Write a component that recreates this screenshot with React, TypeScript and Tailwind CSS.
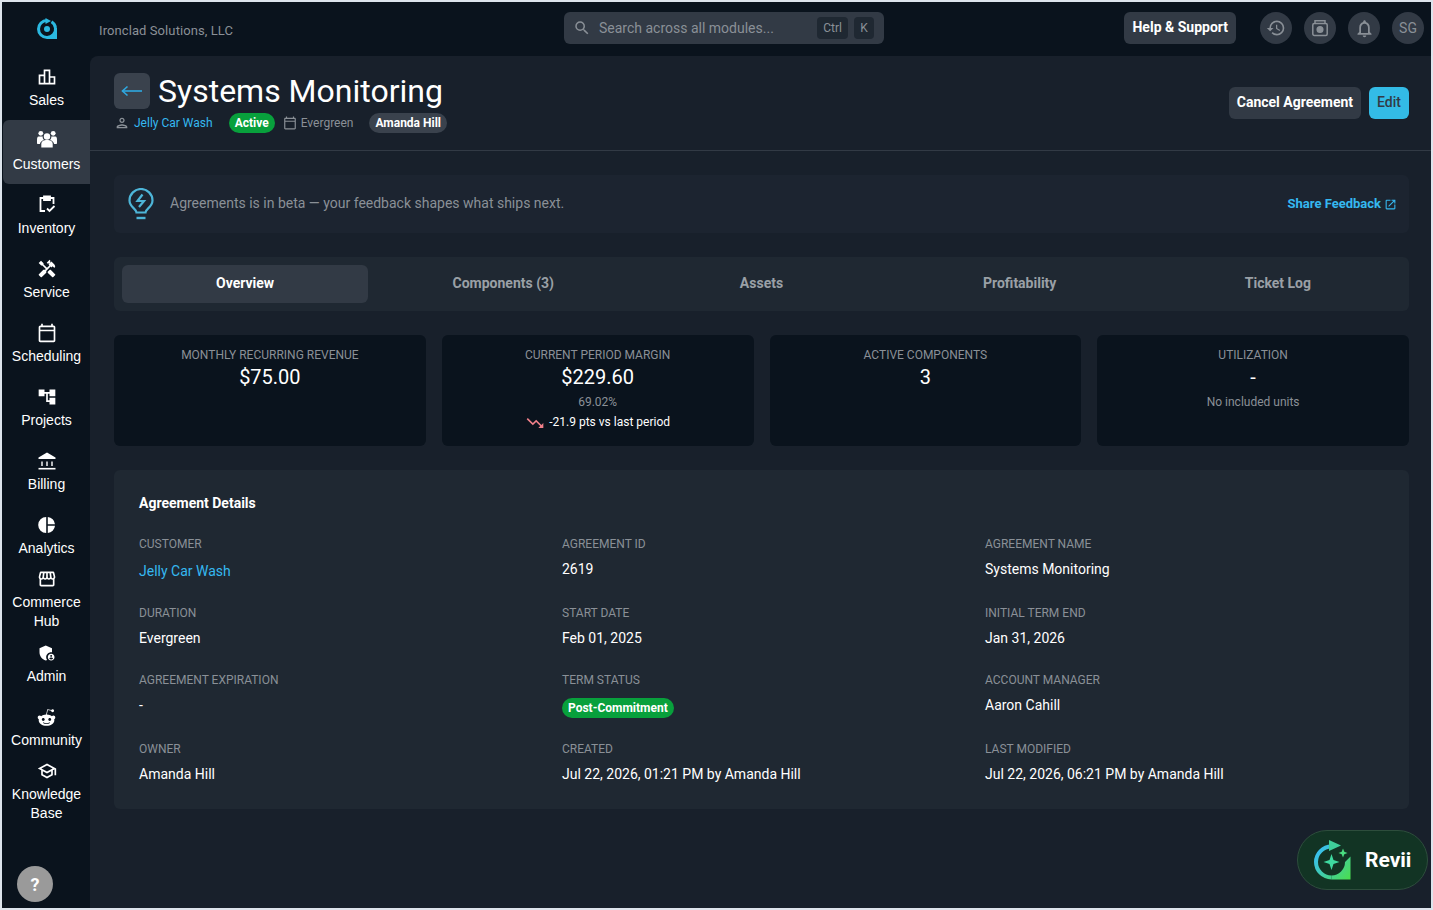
import React from "react";
import {
  MdOutlineLeaderboard, MdHandyman, MdOutlineCalendarToday, MdAccountTree,
  MdOutlineStorefront, MdAdminPanelSettings, MdOutlineSchool, MdHistory,
  MdOutlineNotifications, MdSearch, MdOutlinePerson, MdTrendingDown, MdOpenInNew,
} from "react-icons/md";
import { FaRedditAlien } from "react-icons/fa";

const People = () => (
  <svg viewBox="0 0 20 20" width="20" height="20" fill="currentColor">
    <circle cx="10" cy="7.500" r="3.200" />
    <circle cx="3.800" cy="4.300" r="2.400" />
    <circle cx="16.200" cy="4.300" r="2.400" />
    <path d="M4.300 18.500v-3.500c0-2.700 2.500-4 5.700-4s5.700 1.300 5.700 4v3.500z" />
    <path d="M1.500 7.500h4.200c-.2 1.500.4 2.700 1.300 3.500-2 .6-3.700 1.800-4.100 4H1c-.6 0-1-.4-1-1v-3c0-2 .5-3.500 1.500-3.500z" />
    <path d="M18.500 7.500h-4.200c.2 1.500-.4 2.700-1.300 3.500 2 .6 3.700 1.800 4.100 4H19c.6 0 1-.4 1-1v-3c0-2-.5-3.500-1.500-3.500z" />
  </svg>
);
const Bank = () => (
  <svg viewBox="0 0 20 20" width="20" height="20" fill="none" stroke="currentColor">
    <path d="M10 1.500L18.500 6.500V8H1.500V6.500Z" fill="currentColor" stroke="none" />
    <path d="M5 10.500V15M10 10.500V15M15 10.500V15" strokeWidth="1.400" />
    <path d="M1.500 17.700H18.500" strokeWidth="1.600" />
  </svg>
);
const Inv = () => (
  <svg viewBox="0 1 20 20" width="20" height="20" fill="none" stroke="currentColor" strokeWidth="1.800">
    <path d="M7 4H3.500v13H8M13 4h3.500v6" />
    <path d="M7 2.500h6V6H7z" fill="currentColor" />
    <path d="M10 14.500l2.500 2.500 5-5" />
  </svg>
);
const Pie = () => (
  <svg viewBox="0 0 20 20" width="20" height="20" fill="currentColor">
    <path d="M9.200 2v16a8 8 0 0 1 0-16zM10.800 2a8 8 0 0 1 7.200 7.200h-7.200zM10.800 10.800H18a8 8 0 0 1-7.200 7.200z" />
  </svg>
);
const Logo = () => (
  <svg viewBox="0 0 20 21" width="20" height="21" fill="none" className="ml-[2px]">
    <path d="M10 2.500A8.500 8.500 0 0 0 10 19.500" stroke="#2bb8e0" strokeWidth="3" />
    <path d="M14.500 3.800A8.500 8.500 0 0 1 18.500 10" stroke="#2bb8e0" strokeWidth="3" />
    <path d="M20 10V21H10V18A7 7 0 0 0 17 10Z" fill="#2bb8e0" />
    <path d="M8.500 0L14 3L8.500 6Z" fill="#2bb8e0" />
    <circle cx="10" cy="11" r="3" fill="#2bb8e0" />
  </svg>
);
const RevLogo = () => (
  <svg viewBox="0 0 38 40" width="38" height="40" fill="none">
    <defs>
      <linearGradient id="rg" gradientUnits="userSpaceOnUse" x1="2" y1="10" x2="36" y2="38">
        <stop offset="0" stopColor="#38bdf8" />
        <stop offset="1" stopColor="#4ade50" />
      </linearGradient>
    </defs>
    <path d="M17.500 6.500A15.500 15.500 0 0 0 17.500 37.500" stroke="url(#rg)" strokeWidth="4" />
    <path d="M36.500 16.500V39.500H17.500V35.500A13.500 13.500 0 0 0 31 22Z" fill="url(#rg)" />
    <path d="M15 0L27 5.500L15 11Z" fill="#3fcf9a" />
    <path d="M17.500 14l2 6 6 2-6 2-2 6-2-6-6-2 6-2z" fill="#3fd9a0" />
    <path d="M29 8.500l1.300 3.200 3.200 1.300-3.200 1.300-1.300 3.200-1.300-3.200-3.200-1.300 3.200-1.300z" fill="#4ade80" />
  </svg>
);
const Bulb = () => (
  <svg viewBox="0 0 26 32" width="26" height="32" fill="none" stroke="#4db5d8" strokeWidth="2.200">
    <path d="M8.500 24.500C8.500 21 1.500 19 1.500 12.500a11.500 11.500 0 0 1 23 0C24.500 19 17.500 21 17.500 24.500Z" />
    <path d="M8.500 30H17.500" strokeWidth="2.400" />
    <path d="M14.500 6.500L9.500 13H16L11 19" />
  </svg>
);
const Timer = () => (
  <svg viewBox="0 0 20 20" width="20" height="20" fill="none" stroke="#8a9097" strokeWidth="1.500">
    <path d="M5 5.500V2.800h10v2.700" />
    <rect x="2.800" y="5.500" width="14.400" height="12" rx="1.500" />
    <circle cx="10" cy="11.500" r="2.800" fill="#8a9097" />
  </svg>
);
const BackArrow = () => (
  <svg viewBox="0 0 22 12" width="22" height="12" fill="none" stroke="#2fa8e0" strokeWidth="1.600">
    <path d="M1.500 6H21" />
    <path d="M6.500 1.500L1.500 6L6.500 10.500" />
  </svg>
);

const nav: { label: string[]; icon: React.ReactNode; h: string; active?: boolean; up?: boolean }[] = [
  { label: ["Sales"], icon: <MdOutlineLeaderboard size={20} />, h: "h-16" },
  { label: ["Customers"], icon: <People />, h: "h-16", active: true, up: true },
  { label: ["Inventory"], icon: <Inv />, h: "h-16" },
  { label: ["Service"], icon: <MdHandyman size={20} />, h: "h-16" },
  { label: ["Scheduling"], icon: <MdOutlineCalendarToday size={20} />, h: "h-16" },
  { label: ["Projects"], icon: <MdAccountTree size={20} />, h: "h-16" },
  { label: ["Billing"], icon: <Bank />, h: "h-16" },
  { label: ["Analytics"], icon: <Pie />, h: "h-[54px]" },
  { label: ["Commerce", "Hub"], icon: <MdOutlineStorefront size={20} />, h: "h-[74px]" },
  { label: ["Admin"], icon: <MdAdminPanelSettings size={20} />, h: "h-16" },
  { label: ["Community"], icon: <FaRedditAlien size={19} />, h: "h-[54px]" },
  { label: ["Knowledge", "Base"], icon: <MdOutlineSchool size={20} />, h: "h-[74px]" },
];

const NavItem = ({ item }: { item: (typeof nav)[number] }) => (
  <div
    className={`${item.h} flex flex-col items-center shrink-0 ${item.up ? "pt-[9px]" : "pt-[11px]"} ml-px rounded-l-md text-white ${
      item.active ? "bg-[#323a45]" : ""
    }`}
  >
    <div className="h-5 flex items-center justify-center">{item.icon}</div>
    <div className={`${item.up ? "mt-[6px]" : "mt-1"} text-center text-[14px] leading-[19px] font-['Liberation_Sans',sans-serif]`}>
      {item.label.map((l) => (
        <div key={l}>{l}</div>
      ))}
    </div>
  </div>
);

const RoundBtn = ({ children }: { children: React.ReactNode }) => (
  <div className="w-8 h-8 rounded-full bg-[#323a45] flex items-center justify-center text-[#8a9097]">{children}</div>
);

const Stat = ({ title, value, sub, trend }: { title: string; value: string; sub?: string; trend?: boolean }) => (
  <div className="h-[111px] rounded-md bg-[#0a131d] flex flex-col items-center pt-[11px]">
    <div className="text-[12px] leading-[18px] text-[#8a9097] uppercase">{title}</div>
    <div className="text-[20px] leading-[28px] text-white mt-[-1px]">{value}</div>
    {sub && <div className="text-[12px] leading-[18px] text-[#8a9097] mt-[2px]">{sub}</div>}
    {trend && (
      <div className="flex items-center gap-[4px] text-[12px] leading-[18px] text-white">
        <MdTrendingDown size={20} className="text-[#f0808a] mt-[2px]" />
        -21.9 pts vs last period
      </div>
    )}
  </div>
);

const Field = ({ label, children }: { label: string; children: React.ReactNode }) => (
  <div>
    <div className="text-[12px] leading-[18px] text-[#8a9097] uppercase">{label}</div>
    <div className="mt-[6px] text-[14px] leading-[20px] text-white">{children}</div>
  </div>
);

export default function App() {
  return (
    <div className="w-[1433px] h-[910px] border-2 border-[#dde4ec] bg-[#0a131d] flex overflow-hidden relative font-['Roboto',sans-serif]">
      <aside className="w-[88px] shrink-0 flex flex-col">
        <div className="h-[54px] shrink-0 flex items-center justify-center pb-[1px]">
          <Logo />
        </div>
        {nav.map((n) => (
          <NavItem key={n.label[0]} item={n} />
        ))}
        <div className="mt-[42px] ml-[15px] w-9 h-9 rounded-full bg-[#9a9a9a] flex items-center justify-center text-white font-bold text-[18px]">
          ?
        </div>
      </aside>
      <div className="flex-1 flex flex-col min-w-0">
        <header className="h-[54px] shrink-0 flex items-center relative pr-[7px]">
          <div className="ml-[9px] mt-1 text-[13px] tracking-[0.09px] text-[#8a9097] w-[465px]">Ironclad Solutions, LLC</div>
          <div className="w-[320px] h-8 rounded-md bg-[#323a45] flex items-center pl-[9px] pr-[10px] mt-[-2px]">
            <MdSearch size={18} className="text-[#8a9097]" />
            <span className="ml-2 text-[14px] text-[#8a9097] flex-1">Search across all modules...</span>
            <span className="h-[22px] px-[6px] rounded bg-[#1f2832] flex items-center text-[12px] text-[#8a9097]">Ctrl</span>
            <span className="h-[22px] w-[20px] ml-[6px] rounded bg-[#1f2832] flex items-center justify-center text-[12px] text-[#8a9097]">K</span>
          </div>
          <div className="ml-auto flex items-center mt-[-2px]">
            <div className="h-8 px-2 pb-[2px] rounded-md bg-[#323a45] flex items-center text-[14px] font-bold text-white mr-6">Help &amp; Support</div>
            <div className="flex gap-3">
              <RoundBtn><MdHistory size={20} /></RoundBtn>
              <RoundBtn><Timer /></RoundBtn>
              <RoundBtn><MdOutlineNotifications size={21} /></RoundBtn>
              <RoundBtn><span className="text-[14px]">SG</span></RoundBtn>
            </div>
          </div>
        </header>
        <main className="flex-1 bg-[#18202b] rounded-tl-lg min-h-0">
          <div className="h-[95px] border-b border-[#323a45] pl-6 pr-[22px] flex justify-between">
            <div>
              <div className="flex items-center gap-2 pt-[17px]">
                <div className="w-9 h-9 rounded-md bg-[#3a424d] flex items-center justify-center">
                  <BackArrow />
                </div>
                <h1 className="text-[32px] leading-[36px] text-white">Systems Monitoring</h1>
              </div>
              <div className="flex items-center h-5 mt-1 text-[12px]">
                <MdOutlinePerson size={16} className="text-[#8a9097]" />
                <span className="ml-[4px] text-[#35b8f0]">Jelly Car Wash</span>
                <span className="ml-4 h-5 px-[6px] rounded-full bg-[#08a03c] text-white font-bold flex items-center">Active</span>
                <MdOutlineCalendarToday size={14} className="ml-2 text-[#8a9097]" />
                <span className="ml-[4px] text-[#8a9097]">Evergreen</span>
                <span className="ml-4 h-5 px-[6px] rounded-full bg-[#3a424d] text-white font-bold flex items-center">Amanda Hill</span>
              </div>
            </div>
            <div className="flex gap-2 pt-[31px]">
              <div className="h-8 px-2 pb-[2px] rounded-md bg-[#323a45] flex items-center text-[14px] font-bold text-white">Cancel Agreement</div>
              <div className="h-8 px-2 pb-[2px] rounded-md bg-[#33bbe6] flex items-center text-[14px] font-medium text-[#323a45]">Edit</div>
            </div>
          </div>
          <div className="pl-6 pr-[22px] pt-6">
            <div className="h-[58px] rounded-md bg-[#1c2430] flex items-center pl-[14px] pr-3">
              <Bulb />
              <span className="ml-4 pb-[2px] text-[14px] text-[#8a9097] flex-1">Agreements is in beta — your feedback shapes what ships next.</span>
              <span className="text-[13px] font-bold text-[#35b8f0]">Share Feedback</span>
              <MdOpenInNew size={13} className="ml-[3px] text-[#35b8f0]" />
            </div>
            <div className="mt-6 h-[54px] rounded-md bg-[#1f2832] p-2 grid grid-cols-5 gap-3">
              {["Overview", "Components (3)", "Assets", "Profitability", "Ticket Log"].map((t, i) => (
                <div
                  key={t}
                  className={`rounded-md pb-[2px] flex items-center justify-center text-[14px] font-bold ${
                    i === 0 ? "bg-[#323a45] text-white" : "text-[#9aa0a6]"
                  }`}
                >
                  {t}
                </div>
              ))}
            </div>
            <div className="mt-6 grid grid-cols-4 gap-4">
              <Stat title="Monthly Recurring Revenue" value="$75.00" />
              <Stat title="Current Period Margin" value="$229.60" sub="69.02%" trend />
              <Stat title="Active Components" value="3" />
              <Stat title="Utilization" value="-" sub="No included units" />
            </div>
            <div className="mt-6 h-[339px] rounded-md bg-[#1f2832] px-[25px] pt-[23px]">
              <div className="text-[14px] leading-[20px] font-bold text-white">Agreement Details</div>
              <div className="mt-[22px] grid grid-cols-[423px_423px_1fr] grid-rows-[69px_67px_69px_68px]">
                <Field label="Customer"><span className="text-[#35b8f0] relative top-[2px]">Jelly Car Wash</span></Field>
                <Field label="Agreement ID">2619</Field>
                <Field label="Agreement Name">Systems Monitoring</Field>
                <Field label="Duration">Evergreen</Field>
                <Field label="Start Date">Feb 01, 2025</Field>
                <Field label="Initial Term End">Jan 31, 2026</Field>
                <Field label="Agreement Expiration">-</Field>
                <Field label="Term Status">
                  <span className="inline-flex h-5 px-[6px] rounded-full bg-[#08a03c] text-[12px] font-bold items-center relative top-[2px]">Post-Commitment</span>
                </Field>
                <Field label="Account Manager">Aaron Cahill</Field>
                <Field label="Owner">Amanda Hill</Field>
                <Field label="Created">Jul 22, 2026, 01:21 PM by Amanda Hill</Field>
                <Field label="Last Modified">Jul 22, 2026, 06:21 PM by Amanda Hill</Field>
              </div>
            </div>
          </div>
        </main>
      </div>
      <div className="absolute right-[3px] bottom-[18px] w-[131px] h-[60px] rounded-full bg-[#123424] border border-[#2d4d3c] flex items-center pl-4 gap-[13px]">
        <RevLogo />
        <span className="pt-[2px] text-[21px] font-bold text-white">Revii</span>
      </div>
    </div>
  );
}
